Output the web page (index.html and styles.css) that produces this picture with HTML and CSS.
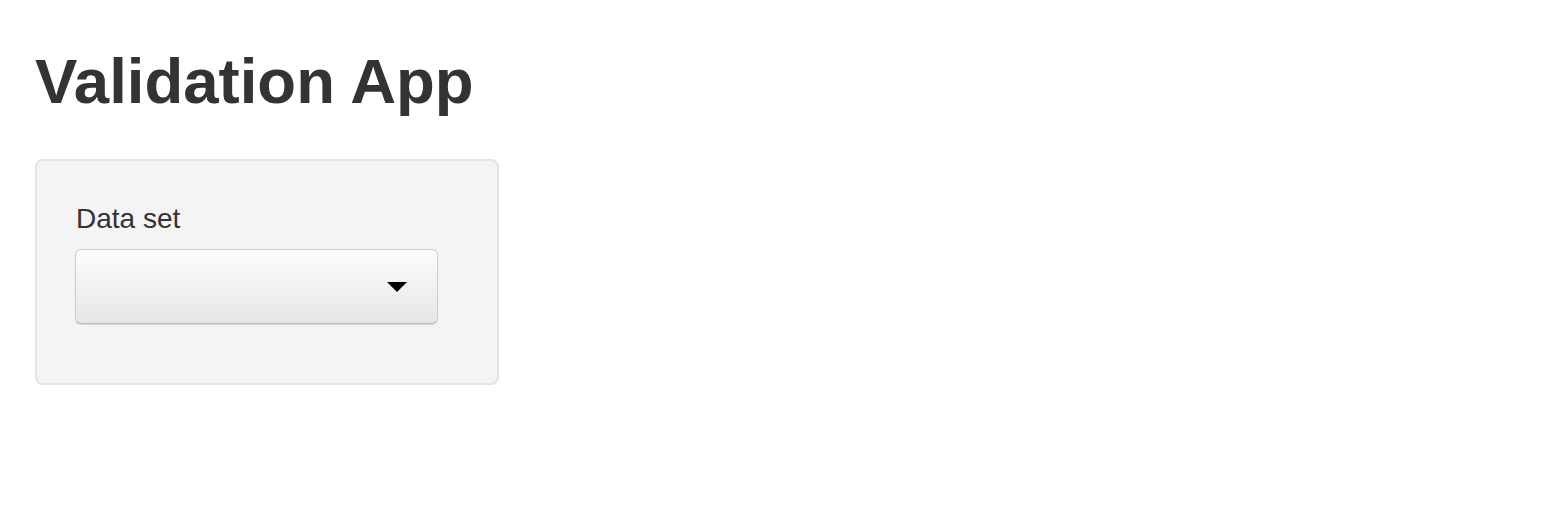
FILE: index.html
```html
<!DOCTYPE html>
<html>
<head>
<meta charset="utf-8">
<title>Validation App</title>
<link rel="stylesheet" href="styles.css">
</head>
<body>
<div class="container">
  <h2 class="title">Validation App</h2>
  <div class="well">
    <label class="label">Data set</label>
    <div class="select">
      <svg class="arrow" width="20" height="10" viewBox="0 0 20 10"><polygon points="0,0 20,0 10,10" fill="#000"/></svg>
    </div>
  </div>
</div>
</body>
</html>
```
FILE: styles.css
```css
html, body {
  margin: 0;
  padding: 0;
  background: #fff;
}
body {
  font-family: "Liberation Sans", Arial, sans-serif;
  color: #333;
}
.container {
  padding: 0 35px;
}
.title {
  margin: 0;
  padding-top: 36px;
  font-size: 63.5px;
  line-height: 90px;
  font-weight: bold;
  color: #333;
  height: 89px;
  margin-bottom: 34px;
}
.well {
  width: 384px;
  padding: 38px;
  padding-bottom: 39px;
  background: #f4f4f4;
  border: 2px solid #e3e3e3;
  border-radius: 8px;
  box-sizing: content-box;
}
.label {
  display: block;
  font-size: 28px;
  line-height: 40px;
  color: #333;
  margin-bottom: 10px;
  padding-left: 1px;
}
.select {
  height: 73px;
  border: 1px solid #cfcfcf;
  border-bottom-color: #b9b9b9;
  border-radius: 6px;
  background: linear-gradient(#fcfcfc, #e6e6e6);
  box-shadow: 0 1px 1px rgba(0,0,0,0.12);
  margin-bottom: 20px;
  display: flex;
  align-items: center;
  justify-content: flex-end;
  padding-right: 30px;
  box-sizing: content-box;
  width: 331px;
}
.arrow {
  display: block;
  margin-top: 1px;
}
```
